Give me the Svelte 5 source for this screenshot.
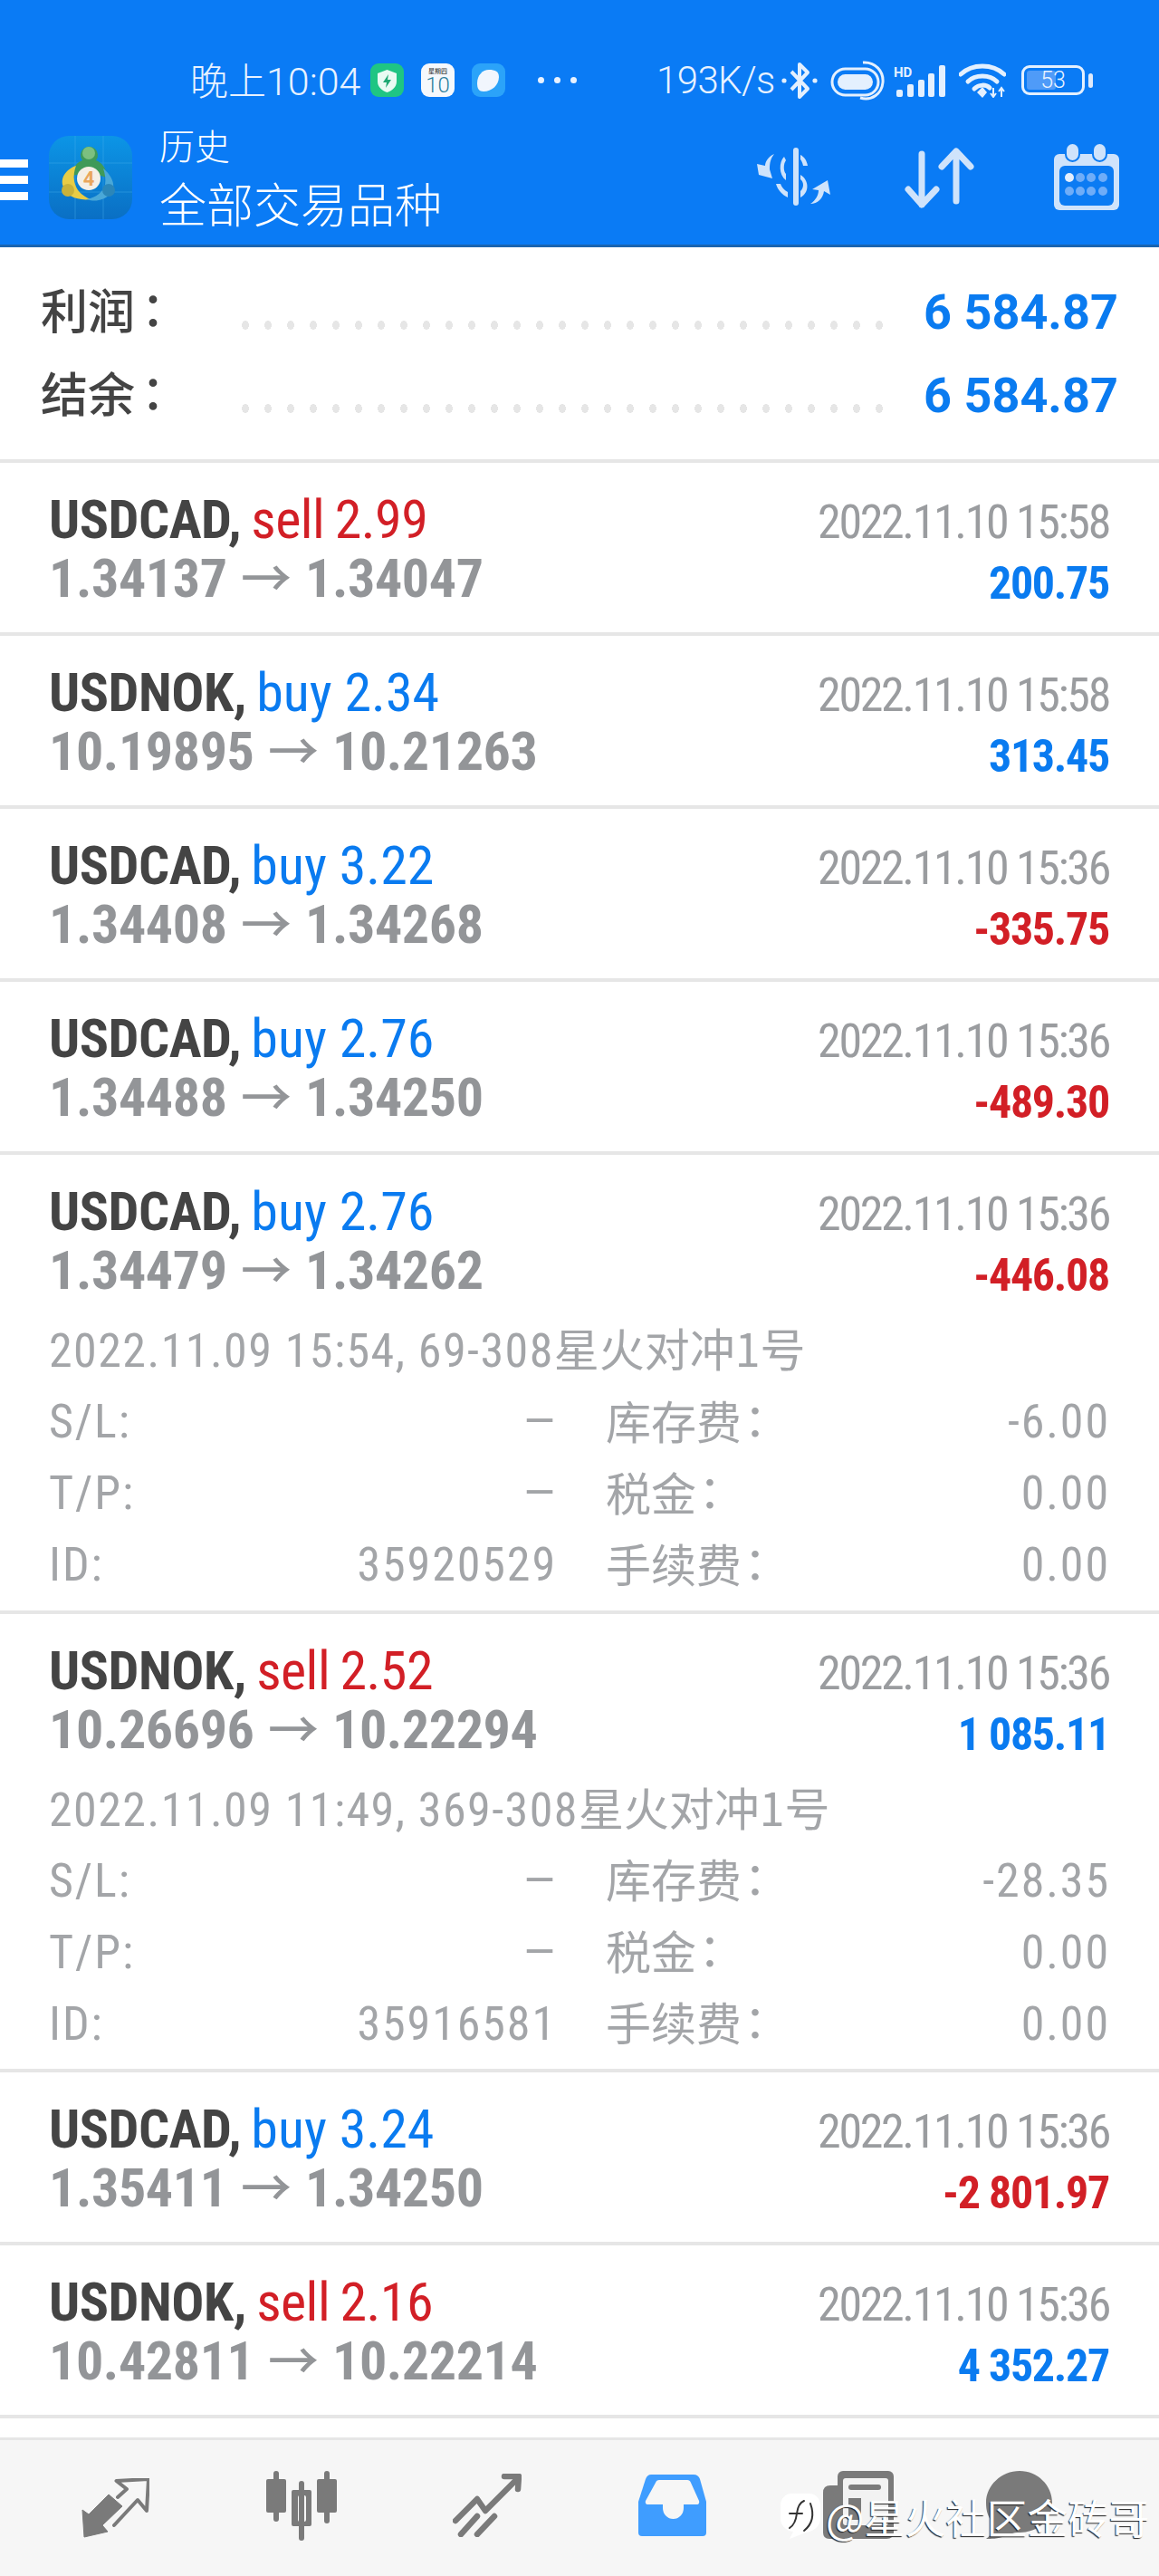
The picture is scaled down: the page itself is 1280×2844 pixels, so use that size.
<script>
const trades = [
  { sym:'USDCAD', side:'sell', vol:'2.99', from:'1.34137', to:'1.34047', time:'2022.11.10 15:58', profit:'200.75' },
  { sym:'USDNOK', side:'buy', vol:'2.34', from:'10.19895', to:'10.21263', time:'2022.11.10 15:58', profit:'313.45' },
  { sym:'USDCAD', side:'buy', vol:'3.22', from:'1.34408', to:'1.34268', time:'2022.11.10 15:36', profit:'-335.75' },
  { sym:'USDCAD', side:'buy', vol:'2.76', from:'1.34488', to:'1.34250', time:'2022.11.10 15:36', profit:'-489.30' },
  { sym:'USDCAD', side:'buy', vol:'2.76', from:'1.34479', to:'1.34262', time:'2022.11.10 15:36', profit:'-446.08',
    detail:{ open:'2022.11.09 15:54, 69-308', who:'星火对冲1号', id:'35920529', swap:'-6.00' } },
  { sym:'USDNOK', side:'sell', vol:'2.52', from:'10.26696', to:'10.22294', time:'2022.11.10 15:36', profit:'1 085.11',
    detail:{ open:'2022.11.09 11:49, 369-308', who:'星火对冲1号', id:'35916581', swap:'-28.35' } },
  { sym:'USDCAD', side:'buy', vol:'3.24', from:'1.35411', to:'1.34250', time:'2022.11.10 15:36', profit:'-2 801.97' },
  { sym:'USDNOK', side:'sell', vol:'2.16', from:'10.42811', to:'10.22214', time:'2022.11.10 15:36', profit:'4 352.27' },
];
</script>

<div class="page">
  <header class="top">
    <div class="status">
      <span class="clock"><span class="cn">晚上</span>10:04</span>
      <div class="notif">
        <svg class="app" viewBox="0 0 37 37"><rect width="37" height="37" rx="9" fill="#1fc583"/><path d="M18.5 7 L29 11 V20 C29 26 24 30 18.5 32 C13 30 8 26 8 20 V11 Z" fill="#e9fbf3"/><path d="M20 12 L14 21 H18 L17 27 L23 18 H19 Z" fill="#1fa873"/></svg>
        <svg class="app" viewBox="0 0 37 37"><rect width="37" height="37" rx="9" fill="#f5f8fc"/><text x="18.5" y="11" class="tiny">星期四</text><text x="18.5" y="32" class="ten">10</text></svg>
        <svg class="app" viewBox="0 0 37 37"><rect width="37" height="37" rx="9" fill="#2ba3f9"/><path d="M19 7 C26 7 30 9 30 15 C30 24 22 31 13 31 C8 31 6 28 6 22 C6 13 12 7 19 7Z" fill="#f1f6fd"/></svg>
      </div>
      <div class="dots"><i></i><i></i><i></i></div>
      <span class="speed">193K/s</span>
      <svg class="bt" viewBox="0 0 40 44"><path d="M11 12 L29 31 L20 40 V4 L29 13 L11 32" fill="none" stroke="#e4f0fe" stroke-width="4" stroke-linejoin="round"/><circle cx="3" cy="22" r="2.6" fill="#e4f0fe"/><circle cx="37" cy="22" r="2.6" fill="#e4f0fe"/></svg>
      <svg class="vr" viewBox="0 0 60 44"><rect x="2" y="9" width="51" height="29" rx="14.5" fill="none" stroke="#e4f0fe" stroke-width="3"/><rect x="8" y="15" width="39" height="17" rx="8.5" fill="#e4f0fe"/><path d="M36 2 C50 1 59 12 58 24 C57 36 46 45 33 41" fill="none" stroke="#e4f0fe" stroke-width="3"/></svg>
      <svg class="sig" viewBox="0 0 57 36"><text x="0" y="14" class="hd">HD</text><rect x="3" y="28" width="7" height="8" rx="2" fill="#e4f0fe"/><rect x="15" y="22" width="7" height="14" rx="2" fill="#e4f0fe"/><rect x="27" y="17" width="7" height="19" rx="2" fill="#e4f0fe"/><rect x="38" y="10" width="7" height="26" rx="2" fill="#e4f0fe"/><rect x="50" y="1" width="7" height="35" rx="2" fill="#e4f0fe"/></svg>
      <svg class="wifi" viewBox="0 0 52 38"><path d="M2 12 C15 0 37 0 50 12" fill="none" stroke="#e4f0fe" stroke-width="5" stroke-linecap="round"/><path d="M10 20 C18 12 34 12 42 20" fill="none" stroke="#e4f0fe" stroke-width="5" stroke-linecap="round"/><path d="M17 28 C22 23 30 23 34 27" fill="none" stroke="#e4f0fe" stroke-width="5" stroke-linecap="round"/><path d="M20 32 L26 26 L31 32 L26 38 Z" fill="#e4f0fe"/><path d="M38 27 V37 M35 33 L38 37 L41 33 M47 37 V27 M44 31 L47 27 L50 31" fill="none" stroke="#e4f0fe" stroke-width="2"/></svg>
      <div class="batt"><div class="level"></div><span class="pct">53</span></div><i class="nub"></i>
    </div>
    <div class="bar">
      <div class="burger"><i></i><i></i><i></i></div>
      <svg class="logo" viewBox="0 0 92 92">
        <defs><linearGradient id="lg" x1="0" y1="0" x2="0" y2="1"><stop offset="0" stop-color="#0c95e6"/><stop offset="1" stop-color="#0a6fc4"/></linearGradient></defs>
        <rect width="92" height="92" rx="22" fill="url(#lg)"/>
        <path d="M29 0 V92 M60 0 V92 M0 30 H92 M0 62 H92" stroke="#4db3ee" stroke-width="1" opacity=".4"/>
        <path d="M26 44 C26 34 32 29 37 27 A9.5 9.5 0 1 1 52 27 C58 29 64 36 64 46 L44 40 Z" fill="#3f9a58"/>
        <circle cx="44" cy="19" r="7" fill="#7cc080"/>
        <path d="M30 33 C18 37 12 48 16 56 C18 66 32 72 46 70 C36 66 30 60 28 50 C27 44 28 38 30 33Z" fill="#e8cc45"/>
        <circle cx="21" cy="60" r="7" fill="#c9b23a"/>
        <path d="M60 36 C70 44 75 56 68 64 C60 72 50 73 42 70 C52 68 60 62 62 54 C63 48 62 42 60 36Z" fill="#4aa8d8"/>
        <circle cx="66" cy="60" r="7" fill="#2b86b8"/>
        <circle cx="44" cy="47" r="13" fill="#f5efe6"/>
        <text x="44" y="55" class="four">4</text>
      </svg>
      <div class="titles">
        <div class="t1">历史</div>
        <div class="t2">全部交易品种</div>
      </div>
      <svg class="a-ex" viewBox="0 0 82 64"><g fill="#cfe3fb"><rect x="41" y="0" width="6" height="64" rx="3"/><path d="M31 10 C25 16 25 30 33 36 L33 29 C30 26 30 18 33 14Z"/><path d="M49 8 C53 10 56 14 57 20 L52 20 C51 16 50 14 49 13Z"/><path d="M49 30 C59 36 59 50 49 55 L49 48 C53 44 53 38 49 35Z"/><path d="M22 40 C24 47 29 52 35 55 L35 49 C31 47 28 43 27 40Z"/><path d="M20 7 C13 10 10 16 10 20 L1 18 L3 30 L18 34 L15 24 C15 17 16 12 20 7Z"/><path d="M60 62 C66 58 69 52 69 47 L62 46 L79 36 L82 52 L75 48 C74 56 68 62 60 62Z"/></g></svg>
      <svg class="a-sort" viewBox="0 0 78 68"><g fill="none" stroke="#cfe3fb" stroke-width="7" stroke-linecap="round" stroke-linejoin="round"><path d="M19 7 V63 M4 46 L19 63 L35 46"/><path d="M57 4 V59 M41 21 L57 4 L73 21"/></g></svg>
      <svg class="a-cal" viewBox="0 0 72 74">
        <rect x="0" y="12" width="72" height="62" rx="6" fill="#cfe3fb"/>
        <rect x="6" y="25" width="60" height="44" rx="6" fill="#0b7bf3"/>
        <rect x="13" y="0" width="15" height="20" rx="7.5" fill="#cfe3fb" stroke="#0b7bf3" stroke-width="2"/>
        <rect x="43" y="0" width="15" height="20" rx="7.5" fill="#cfe3fb" stroke="#0b7bf3" stroke-width="2"/>
        <circle cx="17" cy="38" r="5" fill="#e3eefd"/>
        <g fill="#6fadf8"><circle cx="29" cy="38" r="5"/><circle cx="41" cy="38" r="5"/><circle cx="54" cy="38" r="5"/><circle cx="17" cy="53" r="5"/><circle cx="29" cy="53" r="5"/><circle cx="41" cy="53" r="5"/><circle cx="54" cy="53" r="5"/></g>
      </svg>
    </div>
  </header>

  <section class="summary">
    <div class="sum-row"><span class="sum-label">利润<span class="colon">：</span></span><i class="leader"></i><span class="sum-val">6 584.87</span></div>
    <div class="sum-row"><span class="sum-label">结余<span class="colon">：</span></span><i class="leader"></i><span class="sum-val">6 584.87</span></div>
  </section>

  <ul class="list">
    {#each trades as t}
      <li class="trade" class:open={t.detail}>
        <div class="head">
          <div class="title"><b>{t.sym},</b> <span class={t.side}>{t.side} {t.vol}</span></div>
          <div class="time">{t.time}</div>
        </div>
        <div class="head second">
          <div class="price">{t.from} <span class="arrow">→</span> {t.to}</div>
          <div class="profit" class:loss={t.profit.startsWith('-')}>{t.profit}</div>
        </div>
        {#if t.detail}
          <div class="open-line">{t.detail.open}<span class="cjk">{t.detail.who}</span></div>
          <div class="info">
            <div class="cell"><span>S/L:</span><span class="val">—</span></div>
            <div class="cell"><span class="cjk lab">库存费<span class="colon">：</span></span><span class="val">{t.detail.swap}</span></div>
            <div class="cell"><span>T/P:</span><span class="val">—</span></div>
            <div class="cell"><span class="cjk lab">税金<span class="colon">：</span></span><span class="val">0.00</span></div>
            <div class="cell"><span>ID:</span><span class="val">{t.detail.id}</span></div>
            <div class="cell"><span class="cjk lab">手续费<span class="colon">：</span></span><span class="val">0.00</span></div>
          </div>
        {/if}
      </li>
    {/each}
    <li class="spacer"></li>
  </ul>

  <nav class="nav">
    <svg class="n1" viewBox="0 0 75 66"><path d="M1 35 L8 40 L30 18 L45 31 L23 52 L29 59 L3 65 Z" fill="#7a7a7a" stroke="#7a7a7a" stroke-width="1" stroke-linejoin="round"/><path d="M40 21 L50 12 L38.5 3 L74 1 L72 36 L62 24 L36 52" fill="none" stroke="#7a7a7a" stroke-width="4" stroke-linejoin="round" stroke-linecap="round"/></svg>
    <svg class="n2" viewBox="0 0 78 77"><g fill="#7a7a7a"><rect x="8" y="0" width="6" height="56" rx="3"/><rect x="0" y="9" width="22" height="37" rx="2"/><rect x="36" y="11" width="6" height="66" rx="3"/><path fill-rule="evenodd" d="M30 21 H48 Q50 21 50 23 V59 Q50 61 48 61 H30 Q28 61 28 59 V23 Q28 21 30 21Z M37 27 Q35 27 35 29 V54 Q35 56 37 56 H42 Q44 56 44 54 V29 Q44 27 42 27Z"/><rect x="64" y="0" width="6" height="58" rx="3"/><rect x="56" y="9" width="22" height="37" rx="2"/></g></svg>
    <svg class="n3" viewBox="0 0 76 70"><g fill="none" stroke="#7a7a7a" stroke-width="6.5" stroke-linecap="round" stroke-linejoin="round"><path d="M3 52 L27 28 L36 41 L70 7"/><path d="M57 3 H73 L72 17"/><path d="M27 47 L9 67"/><path d="M46 47 L27 67"/></g></svg>
    <svg class="n4" viewBox="0 0 75 68"><path d="M14 0 H61 Q66 0 68 5 L75 30 V64 Q75 68 71 68 H4 Q0 68 0 64 V30 L8 5 Q10 0 14 0Z" fill="#3f9dff"/><path d="M23 6 H54 Q57 6 58 9 L67 29 Q68 33 64 33 H50 V37 A11.5 12 0 0 1 27 37 V33 H11 Q7 33 8 29 L19 9 Q20 6 23 6Z" fill="#f6f6f6"/></svg>
    <svg class="n5" viewBox="0 0 78 75"><path d="M8 16 Q0 16 0 24 V68 Q0 75 7 75 H70 Q78 75 78 68 V16Z" fill="#7a7a7a"/><rect x="16" y="0" width="62" height="67" rx="6" fill="#7a7a7a"/><rect x="22" y="8" width="50" height="52" rx="3" fill="#f2f2f2"/><rect x="28" y="15" width="36" height="6" rx="3" fill="#7a7a7a"/><rect x="28" y="30" width="14" height="24" fill="#7a7a7a"/></svg>
    <svg class="n6" viewBox="0 0 74 75"><path d="M38 0 C58 0 74 16 74 35 C74 54 58 68 38 68 C30 68 28 70 22 72 C14 75 6 75 1 75 C6 72 9 66 9 58 C3 51 1 44 1 35 C1 16 18 0 38 0Z" fill="#7a7a7a"/></svg>
    <div class="mark">
      <svg class="mark-logo" viewBox="0 0 44 50"><path d="M12 0 H32 C39 0 44 6 44 13 V28 C44 36 36 42 28 43 L10 50 L14 42 C6 41 0 35 0 28 V13 C0 6 5 0 12 0Z" fill="#fff"/><path d="M26 8 C21 10 19 14 18 22 C17 30 15 35 10 38 M10 22 H24 M33 11 C37 22 36 33 26 41" fill="none" stroke="#333" stroke-width="2" stroke-linecap="round"/></svg>
      <span class="mark-text">@星火社区金砖哥</span>
    </div>
  </nav>
</div>

<style>
:global(body){margin:0;background:#fff;}
.page{width:1280px;height:2844px;overflow:hidden;position:relative;background:#fff;font-family:Roboto,"Noto Sans CJK SC",sans-serif;}
ul{list-style:none;margin:0;padding:0;}

.top{height:270px;background:#0a7bf5;border-bottom:3px solid #1a64b0;box-sizing:content-box;color:#fff;}
.status{height:140px;display:flex;align-items:center;padding-left:210px;box-sizing:border-box;padding-top:37px;color:#e8f2ff;}
.clock{font-size:43px;font-weight:300;width:199px;white-space:nowrap;line-height:1;}
.cn{font-family:"Noto Sans CJK SC",sans-serif;font-weight:300;font-size:42px;}
.notif{display:flex;gap:19px;}
.app{width:37px;height:37px;display:block;}
.tiny{font:500 7px "Noto Sans CJK SC",sans-serif;text-anchor:middle;fill:#444;}
.ten{font:300 24px Roboto,sans-serif;text-anchor:middle;fill:#2d7f9e;}
.dots{display:flex;gap:11px;margin-left:36px;width:131px;}
.dots i{width:7px;height:7px;border-radius:50%;background:#e8f2ff;}
.speed{font-size:42px;font-weight:300;letter-spacing:-.6px;width:138px;line-height:1;white-space:nowrap;}
.bt{width:40px;height:44px;}
.vr{width:60px;height:44px;margin-left:14px;}
.sig{width:57px;height:36px;margin-left:10px;}
.hd{font:700 15px Roboto,sans-serif;fill:#e4f0fe;}
.wifi{width:52px;height:38px;margin-left:15px;}
.batt{position:relative;width:70px;height:33px;margin-left:17px;border:3px solid #e4f0fe;border-radius:9px;box-sizing:border-box;overflow:hidden;display:flex;align-items:center;justify-content:center;}
.level{position:absolute;left:3px;top:3px;bottom:3px;width:32px;background:#4f9bf8;border-radius:3px;}
.pct{position:relative;font-size:25px;font-weight:300;line-height:1;color:#e8f2ff;}
.nub{width:5px;height:16px;background:#dfeafb;border-radius:3px;margin-left:4px;}

.bar{height:130px;position:relative;display:flex;align-items:flex-start;}
.burger{width:31px;margin-top:36px;display:flex;flex-direction:column;gap:9px;}
.burger i{height:9px;background:#fff;}
.logo{width:92px;height:92px;margin:10px 0 0 23px;}
.four{font:700 22px Roboto,sans-serif;text-anchor:middle;fill:#e9a65c;}
.titles{margin-left:30px;}
.t1{font:300 39px/1 "Noto Sans CJK SC",sans-serif;margin-top:0;}
.t2{font:300 52px/1 "Noto Sans CJK SC",sans-serif;margin-top:19px;}
.a-ex{width:82px;height:64px;position:absolute;left:835px;top:23px;}
.a-sort{width:78px;height:68px;position:absolute;left:999px;top:23px;}
.a-cal{width:72px;height:74px;position:absolute;left:1164px;top:18px;}

.summary{height:238px;padding-top:24px;box-sizing:border-box;border-bottom:4px solid #e6e6e6;}
.sum-row{display:flex;align-items:center;height:92px;padding:0 45px;}
.sum-label{font:500 52px/1 "Noto Sans CJK SC",sans-serif;color:#444;width:222px;white-space:nowrap;margin-bottom:4px;}
.colon{margin-left:-6px;font-family:"Noto Sans CJK TC",sans-serif;}
.leader{width:712px;height:10px;margin-top:32px;background:radial-gradient(ellipse 4px 5px at 4px 5px,#e6e6e6 95%,transparent 100%) 0 0/25px 10px repeat-x;}
.sum-val{flex:1;text-align:right;font-size:54px;font-weight:700;color:#0a7bf0;line-height:1;white-space:nowrap;margin-top:4px;}

.trade{height:191px;box-sizing:border-box;border-bottom:4px solid #e6e6e6;padding:29px 55px 0 54px;font-stretch:75%;}
.trade.open{height:506.5px;}
.head{display:flex;justify-content:space-between;align-items:flex-end;height:67px;}
.head.second{height:65px;}
.title{font-size:60px;line-height:67px;color:#444;white-space:nowrap;letter-spacing:-.5px;word-spacing:-2px;}
.title b{font-weight:700;}
.sell{color:#d21f26;}
.buy{color:#0a7bf0;letter-spacing:0;word-spacing:0;}
.time{font-size:52px;font-weight:400;letter-spacing:-2.35px;color:#9a9c9f;line-height:60px;white-space:nowrap;}
.price{font-size:60px;font-weight:700;letter-spacing:-.4px;color:#939598;line-height:67px;white-space:nowrap;}
.arrow{font-family:"Noto Sans CJK SC",sans-serif;font-weight:500;font-stretch:normal;font-size:56px;line-height:1;margin:0 2px;}
.profit{font-size:50px;font-weight:700;letter-spacing:-1.3px;color:#0a7bf0;line-height:60px;white-space:nowrap;margin-bottom:-2px;}
.profit.loss{color:#d21f26;}
.open-line{margin-top:21px;height:73px;font-size:52px;font-weight:400;letter-spacing:1.45px;color:#a3a5a8;line-height:60px;white-space:nowrap;}
.cjk{font-family:"Noto Sans CJK SC",sans-serif;font-stretch:normal;font-size:50px;font-weight:400;letter-spacing:0;}
.lab{margin-bottom:6px;}
.lab .colon{margin-left:-10px;}
.val{margin-right:-2px;}
.info{display:grid;grid-template-columns:559px 555px;column-gap:56px;}
.cell{display:flex;justify-content:space-between;align-items:center;height:79px;font-size:52px;font-weight:400;letter-spacing:1.9px;color:#a3a5a8;white-space:nowrap;}
.spacer{height:25px;}

.nav{position:absolute;left:0;right:0;top:2691px;height:153px;background:#f6f6f6;border-top:3px solid #e6e6e6;box-sizing:border-box;display:grid;grid-template-columns:repeat(5,205px) 150px;padding-left:25px;justify-items:center;align-items:start;}
.n1{width:75px;height:66px;margin-top:42px;}
.n2{width:78px;height:77px;margin-top:34px;}
.n3{width:76px;height:70px;margin-top:37px;}
.n4{width:75px;height:68px;margin-top:38px;}
.n5{width:78px;height:75px;margin-top:34px;}
.n6{width:74px;height:75px;margin-top:34px;}
.mark{position:absolute;left:862px;top:59px;display:flex;align-items:center;gap:6px;}
.mark-logo{width:44px;height:50px;display:block;}
.mark-text{font:400 45px/1 "Noto Sans CJK SC",sans-serif;color:#fff;text-shadow:-1px 1px 1px #222;white-space:nowrap;}
</style>
